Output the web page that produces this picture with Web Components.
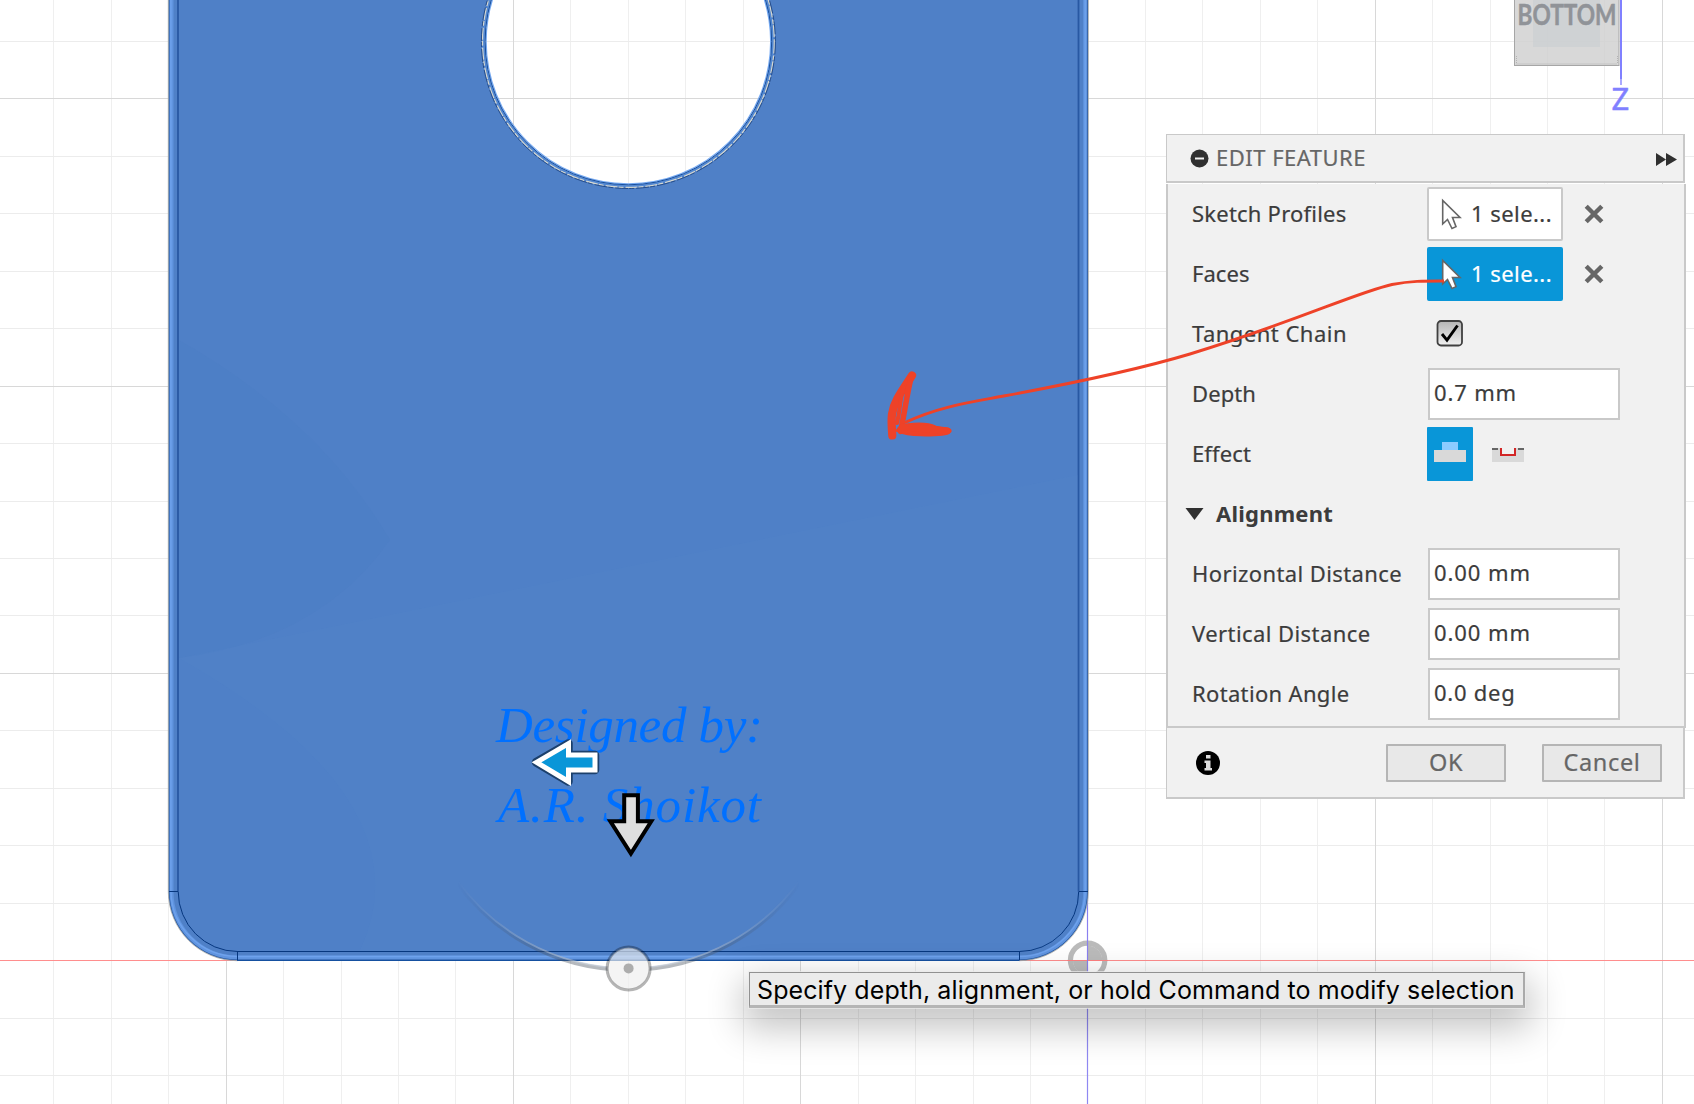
<!DOCTYPE html>
<html lang="en">
<head>
<meta charset="utf-8">
<title>Edit Feature</title>
<style>
html,body{margin:0;height:100%;overflow:hidden;background:#fff}
body{font-family:"Noto Sans","Open Sans",sans-serif}
</style>
</head>
<body>
<cad-app></cad-app>
<script>
const define = (name, html, setup) => customElements.define(name, class extends HTMLElement {
  connectedCallback() {
    if (this.shadowRoot) return;
    const t = document.createElement('template');
    t.innerHTML = html;
    this.attachShadow({mode: 'open'}).append(t.content.cloneNode(true));
    if (setup) setup(this, this.shadowRoot);
  }
});

// Text run tracked so that it spans a given width
define('fit-text', `<style>:host{display:block;white-space:nowrap;line-height:1}span{display:inline-block}</style><span><slot></slot></span>`, (el, root) => {
  const s = root.querySelector('span'), w = +el.getAttribute('w');
  const n = el.textContent.length;
  const d = w - s.getBoundingClientRect().width;
  s.style.letterSpacing = (d / n) + 'px';
});

define('cad-viewport', `<style>:host{display:block;width:1694px;height:1104px}svg{display:block}</style>
<svg width="1694" height="1104" viewBox="0 0 1694 1104">
<defs>
<linearGradient id="fade" gradientUnits="userSpaceOnUse" x1="458" y1="0" x2="799" y2="0"><stop offset="0" stop-color="#fff" stop-opacity="0"/><stop offset=".3" stop-color="#fff" stop-opacity=".8"/><stop offset=".7" stop-color="#fff" stop-opacity=".8"/><stop offset="1" stop-color="#fff" stop-opacity="0"/></linearGradient>
<mask id="am" maskUnits="userSpaceOnUse" x="400" y="800" width="460" height="200"><rect x="400" y="800" width="460" height="200" fill="url(#fade)"/><circle cx="628.6" cy="968.4" r="21" fill="#000"/></mask>
</defs>
<g id="grid" shape-rendering="crispEdges"></g>
<path d="M0 960.5H1694" stroke="#ff8e8e" stroke-width="1.2"/>
<path d="M1087.5 900V1104" stroke="#8f88f2" stroke-width="1.2"/>
<g fill-rule="evenodd">
<path d="M168.5-5H1088V891.5A68.8 68.8 0 0 1 1019.2 960.5H237.5A69 69 0 0 1 168.5 891.5ZM628.4-101.300a143 143 0 1 0 .01 0Z" fill="#4f80c7"/>
</g>
<g fill="none">
<path d="M171.500-5V891.5A66 66 0 0 0 237.500 957.500H1019.200A66 66 0 0 0 1085.200 891.5V-5" stroke="#6094df" stroke-width="4"/>
<path d="M170.900-5V891.5A66.500 66.500 0 0 0 237.500 956.500H1019.200A66.500 66.500 0 0 0 1085.200 891.5V-5" stroke="#6ea2ed" stroke-width="1.4"/>
<path d="M169-5V891.5A68.500 68.500 0 0 0 237.500 960H1019.200A68.500 68.500 0 0 0 1087.600 891.5V-5" stroke="#2d5fa9" stroke-width="1"/>
<path d="M168.300-5V891.5A69.200 69.200 0 0 0 237.500 960.700M1019.200 960.700A69.200 69.200 0 0 0 1088.400 891.5V-5" stroke="#a9a9a5" stroke-width=".8"/>
<path d="M178-5V891.500M1078.500 891.500V-5" stroke="#2858a3" stroke-width="1.800"/>
<path d="M178.200 891.5A59.500 60 0 0 0 237.500 951.500H1019.200A59.500 60 0 0 0 1078.700 891.5" stroke="#06377f" stroke-width="1"/>
<path d="M237 960.500H1019.500" stroke="#1550a0" stroke-width="1.200"/>
<path d="M169 891.500H178M1079 891.500H1088M237.500 951V960M1019.500 951V960" stroke="#06377f"/>
<circle cx="628.400" cy="41.500" r="142.300" stroke="#75a9f2" stroke-width="1.300"/>
<circle cx="628.400" cy="41.500" r="143.300" stroke="#174f9e" stroke-width="1"/>
<circle cx="628.400" cy="41.500" r="144.600" stroke="#5388d2" stroke-width="1.500"/>
<circle cx="628.400" cy="41.500" r="145.900" stroke="#d3d6d0" stroke-width="1.300" stroke-dasharray="12 2 5 1"/>
<circle cx="628.400" cy="41.500" r="147" stroke="#1a3f7a" stroke-width=".8" stroke-dasharray="13 2 5 1"/>
</g>
<path d="M179 340Q320 420 390 540Q320 640 179 658Z" fill="#4475be" opacity=".14"/>
<path d="M179 658L1078 475V891Q1070 951 1019 951H360Q430 800 179 658Z" fill="#5888cc" opacity=".12"/>
<g font-family="'Apple Chancery','Z003','URW Chancery L','Liberation Serif',serif" font-style="italic" font-size="51" fill="#0070ff">
<text x="496" y="742.300" textLength="267">Designed by:</text>
<text x="498" y="822.300" textLength="263">A.R. Shoikot</text></g>
<path d="M536 762.300L568.500 743.500V755H595V770H568.500V781.500Z" fill="#0996d8" stroke="#1c406c" stroke-width="8.500" stroke-linejoin="round"/>
<path d="M536.500 762.300L568.500 743.500V755H595V770H568.500V781.500Z" fill="#0996d8" stroke="#fff" stroke-width="5"/>
<path d="M624.200 795.300H637.900V821.300H651.300L630.900 853.600L610.300 821.300H624.200Z" fill="#dedede" stroke="#000" stroke-width="4"/>
<g mask="url(#am)" fill="none"><path d="M456 881A212 212 0 0 0 801 881" stroke="#46505c" stroke-opacity=".5" stroke-width="4"/><path d="M457 880A211 211 0 0 0 800 880" stroke="#bac5d3" stroke-opacity=".7" stroke-width="1.800"/></g>
<circle cx="628.600" cy="968.400" r="21" fill="#eee" fill-opacity=".65"/>
<circle cx="628.600" cy="968.400" r="21.500" fill="none" stroke="#000" stroke-opacity=".29" stroke-width="3"/>
<circle cx="628.600" cy="968.400" r="5" fill="#adadad"/>
<circle cx="1087.600" cy="960.300" r="17.200" fill="none" stroke="#777" stroke-opacity=".5" stroke-width="5.200"/>
<path d="M1087.600 960.300V945.700A14.600 14.600 0 0 1 1102.200 960.300ZM1087.600 960.300V974.900A14.600 14.600 0 0 1 1073 960.300Z" fill="#777" fill-opacity=".5"/>
<path d="M1067 960.500H1108" stroke="#ff8080"/><path d="M1087.500 908V980" stroke="#8a80f0"/>
<rect x="1514.500" y="-5" width="104.500" height="70.500" fill="#cfcfcf" fill-opacity=".82" stroke="#a6a6a6"/>
<rect x="1533" y="-5" width="67" height="52" fill="#cbcfd2" fill-opacity=".65"/>
<path d="M1516.500 56V63.500M1516.500 64H1617M1617.500 56V63.500" stroke="#aaa" stroke-dasharray="1 1" fill="none" stroke-width=".8"/>
<text x="1517.500" y="24.600" font-family="Lato,'Open Sans',sans-serif" font-weight="700" font-size="29" fill="#909398" stroke="#909398" stroke-width=".5" textLength="99" lengthAdjust="spacingAndGlyphs">BOTTOM</text>
<path d="M1621 0V79" stroke="#8080ff" stroke-width="2"/><path d="M1621 79V85" stroke="#a9a9ff" stroke-width="2"/>
<text x="1611.500" y="110.300" font-family="'Noto Sans',sans-serif" font-size="31" fill="#8080ff" stroke="#8080ff" stroke-width=".5">Z</text>
</svg>`, (el, root) => {
  const g = root.querySelector('#grid');
  const line = (d, c, w) => { const p = document.createElementNS('http://www.w3.org/2000/svg', 'path'); p.setAttribute('d', d); p.setAttribute('stroke', c); p.setAttribute('stroke-width', w); g.append(p); };
  for (const major of [false, true]) {
    for (let i = -19; i < 12; i++) if ((i % 5 === 0) === major) line(`M${Math.floor(1087.9 + i * 57.45) + .5} 0V1104`, major ? '#d8d8d8' : '#efefef', 1);
    for (let i = -17; i < 3; i++) if ((i % 5 === 0) === major) line(`M0 ${Math.floor(960.6 + i * 57.45) + .5}H1694`, major ? '#d8d8d8' : '#ececec', 1);
  }
});

define('form-row', `<style>
:host{display:flex;height:60px;align-items:center;color:#3c3c3c;font-size:22px;-webkit-text-stroke:.2px}
.l{width:235px;flex:none;margin-left:24px;padding-bottom:2px}
</style><div class="l"><slot name="label"></slot></div><slot></slot>`);

define('value-box', `<style>:host{display:flex;box-sizing:border-box;width:192px;height:52px;margin-left:1px;border:2px solid #c9c9c9;background:#fff;align-items:center;padding:0 0 5px 4px;font-size:22px}</style><slot></slot>`);

define('select-box', `<style>
:host{display:flex;align-items:center}
.b{box-sizing:border-box;width:136px;height:54px;border:2px solid #c9c9c9;border-radius:2px;background:#fff;display:flex;align-items:center;padding-left:12px;gap:8px}
:host([active]) .b{background:#0996d8;border-color:#0996d8;color:#fff}
.x{margin-left:21px}
.t{padding-bottom:2px}
</style><div class="b"><svg width="22" height="34" viewBox="0 0 22 34"><path d="M1.700 3.500V27L6.500 22.500L11 31.500L15 29.700L11.500 20.500H19Z" fill="#fff" stroke="#666" stroke-width="1.600"/></svg><div class="t"><slot></slot></div></div>
<svg class="x" width="20" height="20" viewBox="0 0 20 20"><path d="M2.200 2.200L17.800 17.800M17.800 2.200L2.200 17.800" stroke="#666" stroke-width="4.400"/></svg>`);

define('check-box', `<style>:host{display:block;margin:0 0 2px 9px}svg{display:block}</style>
<svg width="28" height="28" viewBox="0 0 28 28"><defs><linearGradient id="c" x1="0" y1="0" x2="0" y2="1"><stop offset="0" stop-color="#b4b4b4"/><stop offset="1" stop-color="#f1f1f1"/></linearGradient></defs><rect x="1.500" y="2" width="24.500" height="24.500" rx="3.500" fill="url(#c)" stroke="#404040" stroke-width="1.800"/><path d="M6 15L11 21.200L21.500 6.500" fill="none" stroke="#000" stroke-width="2.900"/></svg>`);

define('effect-toggle', `<style>:host{display:flex;align-items:center}div{width:46px;height:54px;background:#0996d8;border-radius:1px}svg{display:block}.e{margin-left:19px}</style>
<div><svg width="46" height="54"><path d="M15 15H31V23H15Z" fill="#8ccbff"/><path d="M7 23H39V35H7Z" fill="#d9d9d9"/></svg></div>
<svg class="e" width="32" height="54"><path d="M0 21H32V35H0Z" fill="#d9d9d9"/><path d="M9 21H23V27H9Z" fill="#f1f1f1"/><path d="M0 22H6M26 22H32" stroke="#666" stroke-width="2"/><path d="M9 21V28H23V21" fill="none" stroke="#d22626" stroke-width="2"/></svg>`);

define('push-button', `<style>:host{display:flex;box-sizing:border-box;width:120px;height:38px;border:2px solid #b5b5b5;border-radius:1px;background:#e8e8e8;color:#666;align-items:center;justify-content:center;font-size:23.500px;-webkit-text-stroke:.2px}</style><slot></slot>`);

define('feature-panel', `<style>
:host{display:block;width:520px}
header,footer{display:flex;align-items:center;box-sizing:border-box;width:519px;background:#f1f1f1;border:1px solid #c9c9c9;border-right-width:2px}
header{height:49px;border-bottom-width:2px;padding:0 6px 0 23px;color:#666;font-size:22px;-webkit-text-stroke:.2px}
header svg{flex:none}
header fit-text{margin:0 auto 3px 7px}
main{display:block;box-sizing:border-box;border:2px solid #c9c9c9;border-top:0;background:#f1f1f1;height:544px;margin-top:1px}
footer{height:71px;border-top:0;border-bottom-width:2px;padding:1px 21px 0 28px}
footer svg{margin-right:auto}
push-button+push-button{margin-left:36px}
.sec{height:60px;display:flex;align-items:center;padding-left:17px;gap:12px;color:#3c3c3c;font-weight:700;font-size:22px}
.sec fit-text{margin-bottom:2px}
</style>
<header><svg width="19" height="19" viewBox="0 0 19 19"><circle cx="9.500" cy="9.500" r="9" fill="#303030"/><path d="M5 9.500H14" stroke="#f1f1f1" stroke-width="2"/></svg><fit-text w="150">EDIT FEATURE</fit-text>
<svg width="21" height="14" viewBox="0 0 21 14" style="margin-top:4px"><path d="M0 0L10 6.500V0L21 6.500L10 13V6.500L0 13Z" fill="#303030"/></svg></header>
<main>
<form-row><fit-text slot="label" w="154.500">Sketch Profiles</fit-text><select-box><fit-text w="81">1 sele...</fit-text></select-box></form-row>
<form-row><fit-text slot="label" w="57.500">Faces</fit-text><select-box active><fit-text w="81">1 sele...</fit-text></select-box></form-row>
<form-row><fit-text slot="label" w="155">Tangent Chain</fit-text><check-box></check-box></form-row>
<form-row><fit-text slot="label" w="64">Depth</fit-text><value-box><fit-text w="83">0.7 mm</fit-text></value-box></form-row>
<form-row><fit-text slot="label" w="59">Effect</fit-text><effect-toggle></effect-toggle></form-row>
<div class="sec"><svg width="19" height="12" viewBox="0 0 19 12"><path d="M.5 0H18.500L9.500 12Z" fill="#303030"/></svg><fit-text w="117">Alignment</fit-text></div>
<form-row><fit-text slot="label" w="210">Horizontal Distance</fit-text><value-box><fit-text w="97">0.00 mm</fit-text></value-box></form-row>
<form-row><fit-text slot="label" w="178.500">Vertical Distance</fit-text><value-box><fit-text w="97">0.00 mm</fit-text></value-box></form-row>
<form-row><fit-text slot="label" w="157.500">Rotation Angle</fit-text><value-box><fit-text w="81.500">0.0 deg</fit-text></value-box></form-row>
</main>
<footer><svg width="26" height="26" viewBox="0 0 26 26"><circle cx="13" cy="13" r="12" fill="#000"/><path d="M11 5H15.500V8.500H11ZM9.500 10.500H15.500V18H17V20.500H9.500V18H11V13H9.500Z" fill="#ddd"/></svg>
<push-button><fit-text w="34">OK</fit-text></push-button><push-button><fit-text w="77">Cancel</fit-text></push-button></footer>`);

define('hint-tip', `<style>:host{display:flex;box-sizing:border-box;width:776px;height:36px;align-items:center;padding:3px 0 0 7px;background:#ebebeb;border:1px solid #919191;border-right:2px solid #aaa;border-bottom:3px solid #b5b5b5;outline:1px solid rgba(235,235,235,.7);box-shadow:0 14px 36px 6px rgba(0,0,0,.24);color:#000;font:25px "Inter",sans-serif}</style><slot></slot>`);

// Hand-drawn pointer from the Faces selector to the body
define('red-pointer', `<style>:host{display:block;pointer-events:none}svg{display:block}</style>
<svg width="1694" height="500" viewBox="0 0 1694 500" fill="none" stroke="#ee4228" stroke-linecap="round" stroke-linejoin="round">
<path d="M905 422.500C940 406 972 402 1005 395.800C1085 381 1145 367.500 1190 354C1300 320 1355 293 1392 284.500C1412 280.800 1425 281 1444 281" stroke-width="2.900" stroke-linecap="butt"/>
<path d="M912 375.500C902 391 894 401 892 414C891 422 892 430 892.300 435.500" stroke-width="8.200"/>
<path d="M911.500 376C907 393 904 417 900.500 431.500" stroke-width="5.500"/>
<path d="M903.500 387C900 399 900 411 897 423" stroke-width="4"/>
<path d="M896 431C899 425 903 424 908 424C920 422.500 929 423 936 426.500C943 428 951 427.500 951 431C949 436 932 436 921 435.500C910 435.500 903 434 897 431Z" fill="#ee4228" stroke-width="1.500"/>
<path d="M903 427L947 431" stroke-width="7"/>
</svg>`);

define('cad-app', `<style>
:host{display:block;position:relative;width:1694px;height:1104px;overflow:hidden}
feature-panel,hint-tip,red-pointer{position:absolute}
feature-panel{left:1166px;top:134px}
hint-tip{left:749px;top:972px}
red-pointer{left:0;top:0}
</style><cad-viewport></cad-viewport><hint-tip><fit-text w="757.500">Specify depth, alignment, or hold Command to modify selection</fit-text></hint-tip><feature-panel></feature-panel><red-pointer></red-pointer>`);
</script>
</body>
</html>
